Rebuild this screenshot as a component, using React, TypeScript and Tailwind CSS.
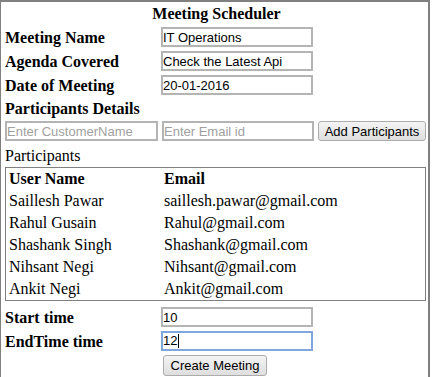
import React from 'react';

const participants = [
  { name: 'Saillesh Pawar', email: 'saillesh.pawar@gmail.com' },
  { name: 'Rahul Gusain', email: 'Rahul@gmail.com' },
  { name: 'Shashank Singh', email: 'Shashank@gmail.com' },
  { name: 'Nihsant Negi', email: 'Nihsant@gmail.com' },
  { name: 'Ankit Negi', email: 'Ankit@gmail.com' },
];

const inputCls =
  "h-[20px] border-2 border-[#b4b4b4] bg-white px-0 font-['Liberation_Sans',Arial,sans-serif] text-[13px] text-black outline-none placeholder:text-[#a0a0a0]";

const buttonCls =
  "h-[20px] whitespace-nowrap rounded-[3px] border border-[#acacac] bg-gradient-to-b from-[#f4f4f4] to-[#dedede] px-[4px] font-['Liberation_Sans',Arial,sans-serif] text-[13px] leading-none text-black";

function FieldRow({ label, value }: { label: string; value: string }) {
  return (
    <div className="flex h-[24px] items-start">
      <div className="flex h-[24px] w-[156px] items-center font-bold">{label}</div>
      <input readOnly defaultValue={value} className={`${inputCls} mt-[1px] w-[152px]`} />
    </div>
  );
}

export default function App() {
  return (
    <div className="min-h-screen bg-white">
      <div className="w-[430px] border-t-2 border-l border-r-2 border-[#808080] pl-[4px] pb-[2px] font-['Liberation_Serif','Times_New_Roman',serif] text-[16px] leading-[18px] text-black">
        <div className="flex h-[24px] items-center justify-center font-bold">Meeting Scheduler</div>

        <FieldRow label="Meeting Name" value="IT Operations" />
        <FieldRow label="Agenda Covered" value="Check the Latest Api" />
        <FieldRow label="Date of Meeting" value="20-01-2016" />

        {/* Participants */}
        <div className="flex h-[22px] items-center font-bold">Participants Details</div>
        <div className="flex h-[24px] items-start gap-[4px] pt-[1px]">
          <input readOnly placeholder="Enter CustomerName" className={`${inputCls} w-[153px]`} />
          <input readOnly placeholder="Enter Email id" className={`${inputCls} w-[152px]`} />
          <button className={`${buttonCls} w-[108px]`}>Add Participants</button>
        </div>
        <div className="flex h-[23px] items-center">Participants</div>

        <div className="w-[421px] border border-[#808080]">
          <div className="flex h-[22px] items-center pl-[3px] font-bold">
            <div className="w-[155px]">User Name</div>
            <div>Email</div>
          </div>
          {participants.map((p) => (
            <div key={p.email} className="flex h-[22px] items-center pl-[3px]">
              <div className="w-[155px]">{p.name}</div>
              <div>{p.email}</div>
            </div>
          ))}
        </div>

        <div className="mt-[5px]">
          <FieldRow label="Start time" value="10" />
          <div className="flex h-[24px] items-start">
            <div className="flex h-[24px] w-[156px] items-center font-bold">EndTime time</div>
            <div className="mt-[1px] flex h-[20px] w-[152px] items-center border-2 border-[#7fa7dc] bg-white font-['Liberation_Sans',Arial,sans-serif] text-[13px] text-black">
              12
              <span className="ml-[1px] inline-block h-[14px] w-px bg-black" />
            </div>
          </div>
          <div className="flex pt-[1px]">
            <div className="w-[158px]" />
            <button className={`${buttonCls} h-[21px] w-[104px]`}>Create Meeting</button>
          </div>
        </div>
      </div>
    </div>
  );
}
